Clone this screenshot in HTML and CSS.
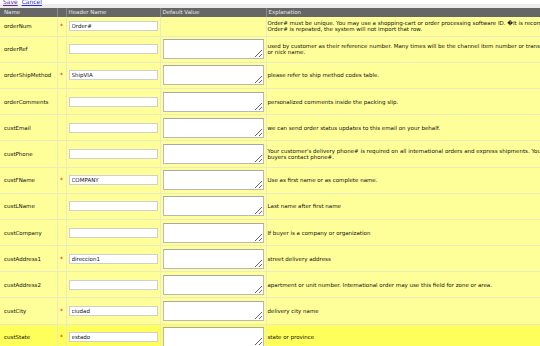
FILE: index.html
```html
<!DOCTYPE html>
<html>
<head>
<meta charset="utf-8">
<link rel="stylesheet" href="styles.css">
</head>
<body>
<div class="actions"><a href="#" class="visited">Save</a> <a href="#">Cancel</a></div>
<div class="band"></div>
<table class="map">
<colgroup><col class="c-name"><col class="c-req"><col class="c-head"><col class="c-def"><col class="c-exp"></colgroup>
<thead>
<tr><th>Name</th><th></th><th>Header Name</th><th>Default Value</th><th>Explanation</th></tr>
</thead>
<tbody>
<tr class="short"><td>orderNum</td><td class="req">*</td><td><input class="in" value="Order#"></td><td></td><td class="exp">Order# must be unique. You may use a shopping-cart or order processing software ID. &#xFFFD;It is recommended to keep this number unique. If<br>Order# is repeated, the system will not import that row.</td></tr>
<tr><td>orderRef</td><td class="req"></td><td><input class="in" value=""></td><td><textarea class="ta"></textarea></td><td class="exp">used by customer as their reference number. Many times will be the channel item number or transaction number<br>or nick name.</td></tr>
<tr><td>orderShipMethod</td><td class="req">*</td><td><input class="in" value="ShipVIA"></td><td><textarea class="ta"></textarea></td><td class="exp">please refer to ship method codes table.</td></tr>
<tr><td>orderComments</td><td class="req"></td><td><input class="in" value=""></td><td><textarea class="ta"></textarea></td><td class="exp">personalized comments inside the packing slip.</td></tr>
<tr><td>custEmail</td><td class="req"></td><td><input class="in" value=""></td><td><textarea class="ta"></textarea></td><td class="exp">we can send order status updates to this email on your behalf.</td></tr>
<tr><td>custPhone</td><td class="req"></td><td><input class="in" value=""></td><td><textarea class="ta"></textarea></td><td class="exp">Your customer's delivery phone# is required on all international orders and express shipments. You may use the<br>buyers contact phone#.</td></tr>
<tr><td>custFName</td><td class="req">*</td><td><input class="in" value="COMPANY"></td><td><textarea class="ta"></textarea></td><td class="exp">Use as first name or as complete name.</td></tr>
<tr><td>custLName</td><td class="req"></td><td><input class="in" value=""></td><td><textarea class="ta"></textarea></td><td class="exp">Last name after first name</td></tr>
<tr><td>custCompany</td><td class="req"></td><td><input class="in" value=""></td><td><textarea class="ta"></textarea></td><td class="exp">If buyer is a company or organization</td></tr>
<tr><td>custAddress1</td><td class="req">*</td><td><input class="in" value="direccion1"></td><td><textarea class="ta"></textarea></td><td class="exp">street delivery address</td></tr>
<tr><td>custAddress2</td><td class="req"></td><td><input class="in" value=""></td><td><textarea class="ta"></textarea></td><td class="exp">apartment or unit number. International order may use this field for zone or area.</td></tr>
<tr><td>custCity</td><td class="req">*</td><td><input class="in" value="ciudad"></td><td><textarea class="ta"></textarea></td><td class="exp">delivery city name</td></tr>
<tr class="hover"><td>custState</td><td class="req">*</td><td><input class="in" value="estado"></td><td><textarea class="ta"></textarea></td><td class="exp">state or province</td></tr>
<tr><td>custZip</td><td class="req">*</td><td><input class="in" value="zip"></td><td><textarea class="ta"></textarea></td><td class="exp">postal code</td></tr>
</tbody>
</table>
</body>
</html>
```
FILE: styles.css
```css
html, body {
  margin: 0;
  padding: 0;
  overflow: hidden;
  background: #fff;
}
body {
  font-family: "DejaVu Sans", Verdana, sans-serif;
  font-size: 5.5px;
  color: #111;
}
.actions {
  height: 5px;
  line-height: 6px;
  margin-top: -1px;
  padding-left: 3px;
  font-size: 6px;
}
.actions a {
  color: #2a2ad8;
  margin-right: 2px;
}
.actions a.visited {
  color: #5a2a9a;
}
.band {
  height: 4px;
  background: #ececec;
}
.map {
  border-collapse: collapse;
  table-layout: fixed;
  width: 700px;
}
.c-name { width: 57px; }
.c-req { width: 9px; }
.c-head { width: 94px; }
.c-def { width: 106px; }
.c-exp { width: 434px; }
.map th {
  background: #666;
  color: #e6e6e6;
  font-weight: normal;
  text-align: left;
  height: 9px;
  line-height: 9px;
  padding: 0 2px;
  border-left: 1px solid #8a8a8a;
}
.map th:first-child {
  padding-left: 4px;
  border-left: none;
}
.map td {
  background: #ffff99;
  border: 1px solid #ebebc2;
  border-top: none;
  padding: 2.6px 2px;
  vertical-align: middle;
  line-height: 6px;
  white-space: nowrap;
  overflow: visible;
}
.map td:first-child {
  padding-left: 4px;
  border-left: none;
}
.map tr.short td {
  padding-top: 3.3px;
  padding-bottom: 3.3px;
}
.map tr.hover td {
  background: #ffff5c;
}
.map td.req {
  color: #f00;
  text-align: center;
  padding: 0;
  font-size: 6px;
}
.map td.exp {
  padding-left: 1px;
}
.in {
  display: block;
  box-sizing: border-box;
  width: 89px;
  height: 10px;
  margin: 0;
  padding: 0 2px;
  border: 1px solid #cfcfcf;
  background: #fff;
  font-family: "DejaVu Sans", Verdana, sans-serif;
  font-size: 5.5px;
  color: #111;
  outline: none;
}
.ta {
  display: block;
  box-sizing: border-box;
  width: 101px;
  height: 20px;
  margin: 0;
  padding: 0;
  border: 1px solid #b8b8b8;
  border-top-color: #a8a8a8;
  background: #fff;
  font-size: 6px;
  resize: both;
}
```
